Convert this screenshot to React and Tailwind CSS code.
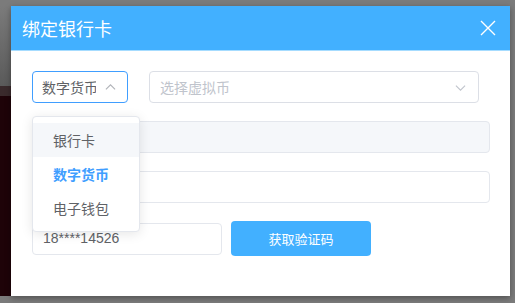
import { useState } from 'react';

const font = { fontFamily: "'Noto Sans CJK SC', 'Liberation Sans', sans-serif" };

export default function App() {
  const [type, setType] = useState('数字货币');
  const options = ['银行卡', '数字货币', '电子钱包'];

  return (
    <div className="w-[515px] h-[303px] bg-[#7b7b7b] flex pt-[6px] overflow-hidden" style={font}>
      {/* page behind the overlay */}
      <div className="w-[11px] flex flex-col">
        <div className="h-[80px] bg-gradient-to-b from-[#7b7b7b] to-[#5a5a5a]"></div>
        <div className="h-[10px] bg-[#3a2a2c]"></div>
        <div className="h-[200px] bg-[#1e0308]"></div>
      </div>

      {/* Dialog */}
      <div className="w-[499px] h-[290px] bg-white flex flex-col relative shadow-[0_2px_6px_rgba(0,0,0,0.35)]">
        <div className="h-[45px] bg-[#42b0ff] border-b border-[#a6dcff] flex items-center justify-between pl-[11px] pr-[14px]">
          <span className="text-[18px] text-white leading-none">绑定银行卡</span>
          <svg viewBox="0 0 16 16" className="w-[16px] h-[16px]" fill="none" stroke="white" strokeWidth="1.4">
            <path d="M1 1L15 15M15 1L1 15" />
          </svg>
        </div>

        <div className="flex flex-col pl-[21px] pr-[20px] pt-[20px] gap-[18px]">
          {/* row 1 */}
          <div className="flex gap-[21px]">
            <div className="w-[96px] h-[32px] border border-[#409eff] rounded-[4px] flex items-center pl-[9px] pr-[9px] gap-[9px]">
              <span className="text-[14px] text-[#606266] whitespace-nowrap overflow-hidden w-[54px] shrink-0">{type}</span>
              <svg viewBox="0 0 12 12" className="w-[11px] h-[11px]" fill="none" stroke="#b0b3b8" strokeWidth="1.2">
                <path d="M1 8L6 3L11 8" />
              </svg>
            </div>
            <div className="w-[330px] h-[32px] border border-[#dcdfe6] rounded-[4px] flex items-center justify-between pl-[10px] pr-[12px]">
              <span className="text-[14px] text-[#c0c4cc]">选择虚拟币</span>
              <svg viewBox="0 0 12 12" className="w-[11px] h-[11px]" fill="none" stroke="#c0c4cc" strokeWidth="1.2">
                <path d="M1 4L6 9L11 4" />
              </svg>
            </div>
          </div>

          {/* row 2 (disabled) */}
          <div className="w-[458px] h-[32px] bg-[#f5f7fa] border border-[#e4e7ed] rounded-[4px]"></div>

          {/* row 3 */}
          <div className="w-[458px] h-[32px] bg-white border border-[#e4e7ed] rounded-[4px]"></div>

          {/* row 4 */}
          <div className="flex gap-[9px] items-center">
            <div className="w-[190px] h-[32px] border border-[#e4e7ed] rounded-[4px] flex items-center pl-[10px]">
              <span className="text-[14px] text-[#606266]" style={{ fontFamily: "'Liberation Sans', sans-serif" }}>18****14526</span>
            </div>
            <button className="w-[140px] h-[35px] bg-[#42b0ff] rounded-[4px] text-[13px] text-white">获取验证码</button>
          </div>
        </div>

        {/* dropdown menu */}
        <div className="absolute left-[21px] top-[110px] w-[108px] bg-white border border-[#e4e7ed] rounded-[4px] shadow-[0_2px_12px_rgba(0,0,0,0.1)] py-[6px]">
          {options.map((o, i) => (
            <div
              key={o}
              onClick={() => setType(o)}
              className={
                'h-[34px] flex items-center pl-[20px] text-[14px] cursor-pointer ' +
                (i === 0 ? 'bg-[#f5f7fa] ' : '') +
                (o === type ? 'text-[#409eff] font-bold' : 'text-[#606266]')
              }
            >
              {o}
            </div>
          ))}
        </div>
      </div>
    </div>
  );
}
